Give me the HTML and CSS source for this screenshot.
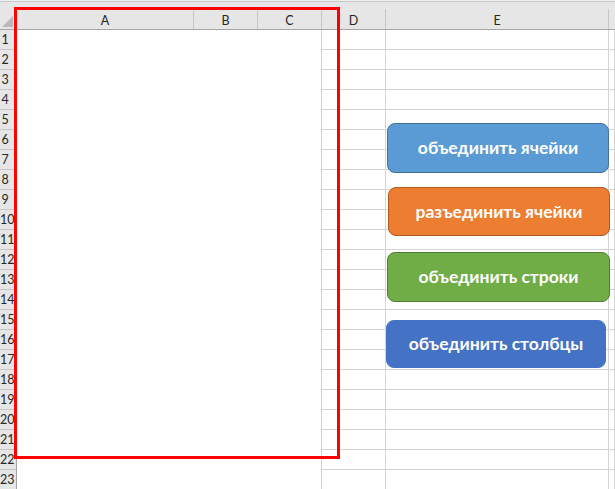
FILE: index.html
```html
<!DOCTYPE html>
<html lang="ru">
<head>
    <meta charset="UTF-8">
    <meta name="viewport" content="width=device-width, initial-scale=1.0">
    <title>Объединение ячеек</title>
    <link rel="stylesheet" href="styles.css">
</head>
<body>
    <div class="sheet">
        <div class="topbar"></div>
        <div class="head">
            <div class="corner"><span class="tri"></span></div>
            <div class="col-h col-a">A</div>
            <div class="col-h col-b">B</div>
            <div class="col-h col-c">C</div>
            <div class="col-h col-d">D</div>
            <div class="col-h col-e">E</div>
            <div class="col-h col-f"></div>
        </div>
        <div class="body">
            <div class="rownums">
                <div>1</div><div>2</div><div>3</div><div>4</div><div>5</div>
                <div>6</div><div>7</div><div>8</div><div>9</div><div>10</div>
                <div>11</div><div>12</div><div>13</div><div>14</div><div>15</div>
                <div>16</div><div>17</div><div>18</div><div>19</div><div>20</div>
                <div>21</div><div>22</div><div>23</div>
            </div>
            <div class="merged"></div>
            <div class="cells col-d"></div>
            <div class="cells col-e"></div>
            <div class="cells col-f"></div>
        </div>

        <!-- shapes drawn over the sheet -->
        <div class="frame"></div>
        <div class="buttons">
            <div class="btn blue">объединить ячейки</div>
            <div class="btn orange">разъединить ячейки</div>
            <div class="btn green">объединить строки</div>
            <div class="btn navy">объединить столбцы</div>
        </div>
    </div>
</body>
</html>
```

FILE: styles.css
```css
* {
    margin: 0;
    padding: 0;
    box-sizing: border-box;
}

body {
    font-family: Lato, 'Open Sans', sans-serif;
    background: #fff;
    width: 615px;
    height: 489px;
    overflow: hidden;
}

.sheet {
    position: relative;
    width: 615px;
    height: 489px;
    overflow: hidden;
}

.topbar {
    height: 2px;
    background: #f0f0f0;
    border-bottom: 1px solid #c8c8c8;
}

.head {
    display: flex;
    height: 28px;
    padding-top: 7px;
    background: #e6e6e6;
    border-bottom: 1px solid #a6a6a6;
}

.corner {
    width: 17px;
    display: flex;
    justify-content: flex-end;
    align-items: flex-end;
    padding: 0 3px 2px 0;
    border-right: 1px solid #c6c6c6;
}

.tri {
    width: 0;
    height: 0;
    border-left: 11px solid transparent;
    border-bottom: 11px solid #b8b8b8;
}

.col-h {
    display: flex;
    justify-content: center;
    align-items: center;
    font-size: 12.5px;
    color: #262626;
    border-right: 1px solid #c6c6c6;
    padding-top: 2px;
}

.col-a { width: 177px; }
.col-b { width: 64px; }
.col-c { width: 64px; }
.col-d { width: 64px; }
.col-e { width: 223px; }
.col-f { flex: 1; border-right: none; }

.body {
    display: flex;
    height: 460px;
}

.rownums {
    width: 17px;
    background: #e6e6e6;
    border-right: 1px solid #a6a6a6;
}

.rownums div {
    height: 20px;
    line-height: 19px;
    padding-right: 6px;
    text-align: center;
    font-size: 12.5px;
    color: #262626;
    border-bottom: 1px solid #c6c6c6;
    white-space: nowrap;
}

.merged {
    width: 305px;
    background: #fff;
    border-right: 1px solid #d4d4d4;
}

.cells {
    border-right: 1px solid #d4d4d4;
    background: repeating-linear-gradient(to bottom, #fff 0 19px, #d4d4d4 19px 20px);
}

.frame {
    position: absolute;
    left: 14px;
    top: 7px;
    width: 326px;
    height: 452px;
    border: 3px solid #ff0000;
}

.buttons {
    position: absolute;
    left: 386px;
    top: 123px;
    display: flex;
    flex-direction: column;
}

.btn {
    display: flex;
    justify-content: center;
    align-items: center;
    height: 50px;
    width: 222px;
    border-radius: 8px;
    border: 1px solid;
    color: #fff;
    font-weight: 700;
    font-size: 17.5px;
    padding-bottom: 1px;
}

.blue {
    margin-left: 1px;
    background: #5b9bd5;
    border-color: #41719c;
}

.orange {
    margin: 14px 0 0 2px;
    height: 49px;
    background: #ed7d31;
    border-color: #ae5a21;
}

.green {
    margin: 16px 0 0 1px;
    width: 223px;
    background: #70ad47;
    border-color: #507e32;
}

.navy {
    margin-top: 18px;
    height: 48px;
    width: 220px;
    background: #4472c4;
    border-color: #4472c4;
}
```
